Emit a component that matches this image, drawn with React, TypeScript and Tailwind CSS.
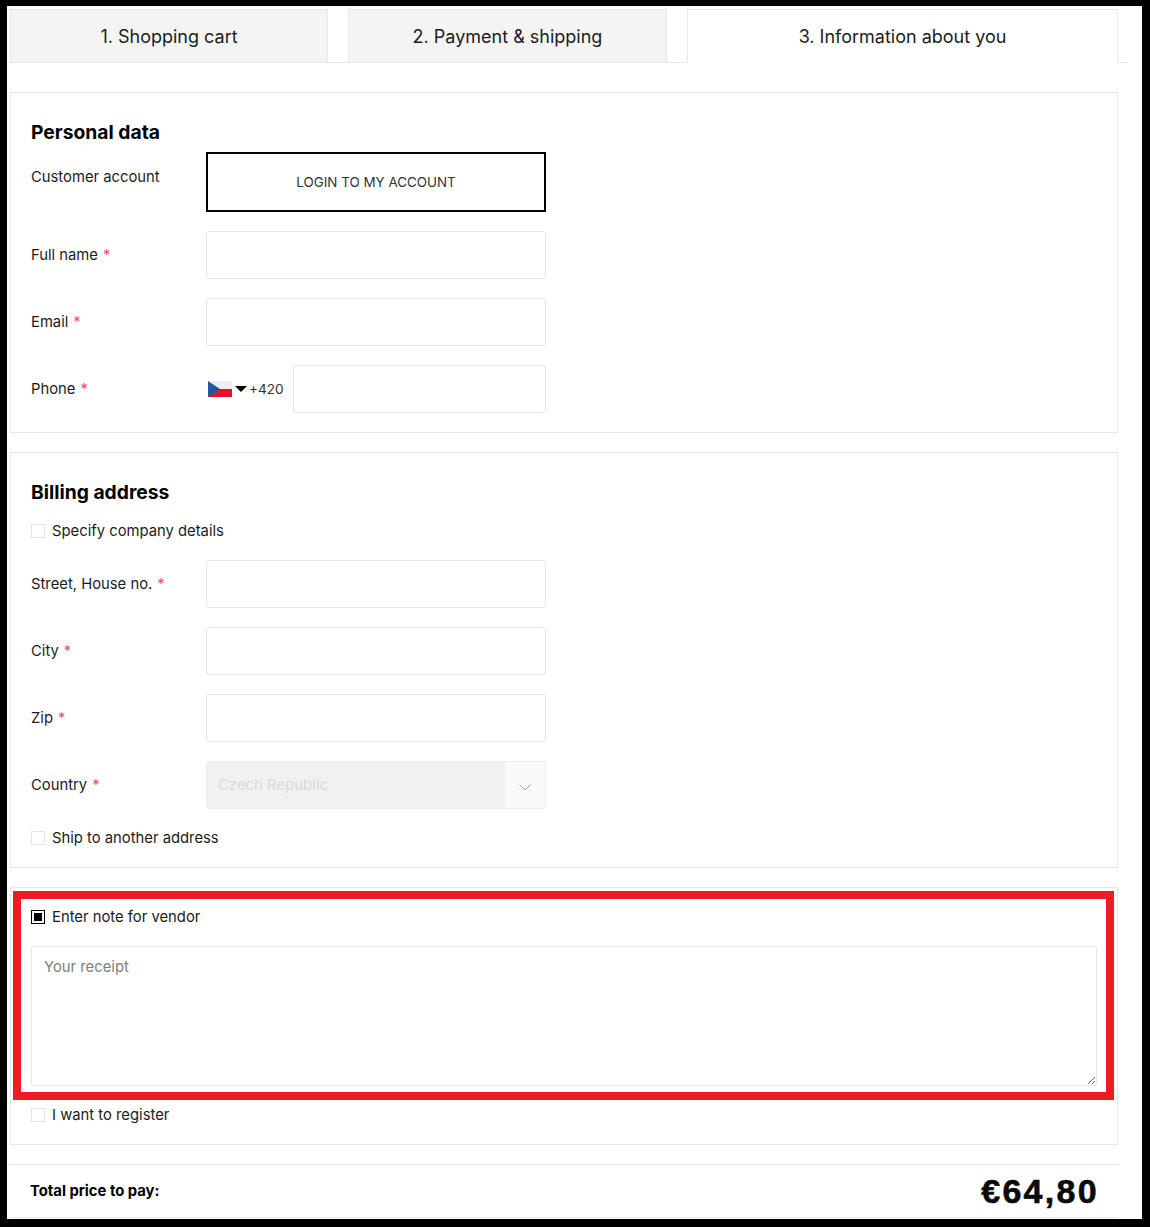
import React from "react";

const labelText = "pt-[1px] text-[14.8px] text-[#1c1c1c]";

const Tab = ({ title, active, className }: { title: string; active?: boolean; className: string }) => (
  <div
    className={`flex h-[54px] items-center justify-center border border-[#e8e8e8] text-[18px] text-[#1c1c1c] ${
      active ? "border-b-white bg-white" : "bg-[#f4f4f4]"
    } ${className}`}
  >
    {title}
  </div>
);

const Required = () => <span className="ml-[5px] text-[#f0525c]">*</span>;

const Field = ({ label }: { label: string }) => (
  <div className="mt-[19px] flex h-[48px] items-center">
    <div className={`w-[175px] ${labelText}`}>
      {label}
      <Required />
    </div>
    <input className="h-full w-[340px] rounded-[3px] border border-[#e5e5e5] bg-white" />
  </div>
);

const Check = ({ label, checked }: { label: string; checked?: boolean }) => (
  <div className="flex h-[20px] items-center gap-[7px]">
    {checked ? (
      <span className="flex h-[14px] w-[14px] items-center justify-center border border-black bg-white">
        <span className="h-[8px] w-[8px] bg-black" />
      </span>
    ) : (
      <span className="h-[14px] w-[14px] border border-[#e5e5e5] bg-white" />
    )}
    <span className={labelText}>{label}</span>
  </div>
);

const Heading = ({ title }: { title: string }) => (
  <h2 className="flex h-[24px] items-center pt-[1px] text-[19.3px] font-bold text-black">{title}</h2>
);

const CzechFlag = () => (
  <svg width="24" height="16" viewBox="0 0 24 16" className="shrink-0">
    <rect width="24" height="8" fill="#efefef" />
    <rect y="8" width="24" height="8" fill="#e8112d" />
    <path d="M0 0L12 8L0 16Z" fill="#1d5aa6" />
  </svg>
);

export default function App() {
  return (
    <div className="relative box-border h-[1227px] w-[1150px] overflow-hidden border-t-[6px] border-r-[8px] border-b-[8px] border-l-[7px] border-black bg-white pt-[3px] pl-[3px] font-['Inter',sans-serif]">
      {/* Tabs */}
      <div className="flex w-[1118px] border-b border-[#e8e8e8]">
        <Tab title="1. Shopping cart" className="-mb-[1px] w-[318px]" />
        <Tab title="2. Payment & shipping" className="-mb-[1px] ml-[20px] w-[319px]" />
        <Tab title="3. Information about you" active className="-mb-[1px] ml-[20px] w-[431px]" />
      </div>

      <div className="w-[1108px]">
        {/* Personal data */}
        <section className="mt-[29px] border border-[#e8e8e8] px-[20px] pt-[27px] pb-[19px]">
          <Heading title="Personal data" />
          <div className="mt-[8px] flex">
            <div className={`w-[175px] pt-[14px] ${labelText}`}>Customer account</div>
            <button className="h-[60px] w-[340px] border-2 border-black bg-white text-[13.4px] text-[#333]">
              LOGIN TO MY ACCOUNT
            </button>
          </div>
          <Field label="Full name" />
          <Field label="Email" />
          <div className="mt-[19px] flex h-[48px] items-center">
            <div className={`w-[177px] ${labelText}`}>
              Phone
              <Required />
            </div>
            <CzechFlag />
            <svg width="12" height="6" viewBox="0 0 12 6" className="mr-[2px] ml-[3px] shrink-0">
              <path d="M0 0H12L6 6Z" fill="#000" />
            </svg>
            <span className="w-[34px] shrink-0 text-[13.6px] text-[#333]">+420</span>
            <input className="ml-[10px] h-full w-[253px] rounded-[3px] border border-[#e5e5e5] bg-white" />
          </div>
        </section>

        {/* Billing address */}
        <section className="mt-[19px] border border-[#e8e8e8] px-[20px] pt-[27px] pb-[19px]">
          <Heading title="Billing address" />
          <div className="mt-[17px]">
            <Check label="Specify company details" />
          </div>
          <Field label="Street, House no." />
          <Field label="City" />
          <Field label="Zip" />
          <div className="mt-[19px] flex h-[48px] items-center">
            <div className={`w-[175px] ${labelText}`}>
              Country
              <Required />
            </div>
            <div className="flex h-full w-[340px] overflow-hidden rounded-[3px] border border-[#ececec]">
              <div className="flex flex-1 items-center bg-[#f1f1f1] pl-[11px] text-[14.8px] font-medium text-[#dcdcdc]">
                Czech Republic
              </div>
              <div className="flex w-[40px] items-center justify-center bg-[#fafafa] pt-[4px]">
                <svg width="12" height="7" viewBox="0 0 12 7">
                  <path d="M0.5 0.5L6 6L11.5 0.5" fill="none" stroke="#8a8a8a" strokeWidth="0.8" />
                </svg>
              </div>
            </div>
          </div>
          <div className="mt-[19px]">
            <Check label="Ship to another address" />
          </div>
        </section>

        {/* Note */}
        <section className="relative mt-[19px] border border-[#e8e8e8] px-[20px] pt-[19px] pb-[19px]">
          <Check label="Enter note for vendor" checked />
          <textarea
            placeholder="Your receipt"
            className="mt-[19px] block h-[140px] w-[1066px] rounded-[3px] border border-[#e5e5e5] bg-white px-[12px] py-[9px] text-[14.8px] text-[#333] placeholder:text-[#808080]"
          />
          <div className="mt-[19px]">
            <Check label="I want to register" />
          </div>
          <div className="pointer-events-none absolute top-[3px] left-[2px] h-[209px] w-[1101px] border-[8px] border-[#ed1c24]" />
        </section>

        {/* Total */}
        <div className="mt-[19px] flex h-[54px] items-center justify-between border-y border-[#e8e8e8] pr-[19px] pl-[20px]">
          <span className="text-[14.8px] font-bold text-black">Total price to pay:</span>
          <span className="font-['Liberation_Sans',sans-serif] text-[34px] font-bold tracking-[2.3px] text-[#0a0a0a] [-webkit-text-stroke:0.6px_#0a0a0a]">
            €64,80
          </span>
        </div>
      </div>
    </div>
  );
}
